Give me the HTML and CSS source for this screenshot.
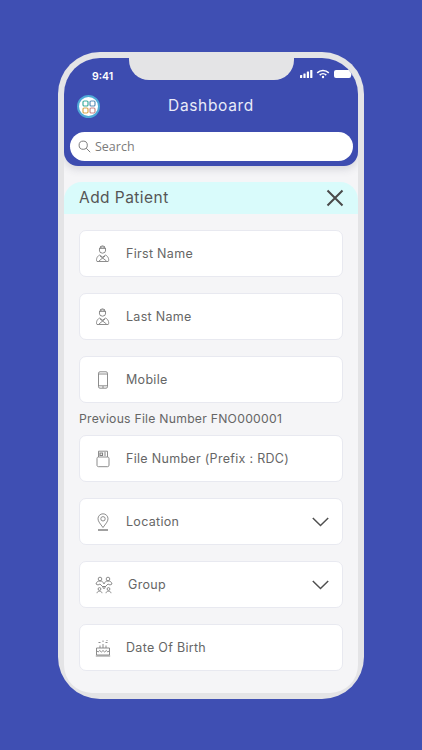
FILE: index.html
```html
<!DOCTYPE html>
<html lang="en">
<head>
<meta charset="utf-8">
<title>Add Patient</title>
<link rel="stylesheet" href="styles.css">
</head>
<body>
<main class="phone">
  <div class="screen">
    <header class="header">
      <div class="notch"></div>
      <div class="status">
        <span class="time">9:41</span>
        <svg class="status-icons" width="53" height="10" viewBox="0 0 53 10">
          <g fill="#fff">
            <rect x="0" y="6" width="2.2" height="3" rx=".5"/><rect x="3.4" y="4.4" width="2.2" height="4.6" rx=".5"/><rect x="6.8" y="2.6" width="2.2" height="6.4" rx=".5"/><rect x="10.2" y="1" width="2.2" height="8" rx=".5"/>
            <circle cx="23" cy="8" r="1.2"/>
            <rect x="34" y="1" width="17" height="8" rx="2"/><rect x="51.6" y="3.6" width="1.2" height="3" rx=".6"/>
          </g>
          <g fill="none" stroke="#fff" stroke-width="1.5">
            <path d="M17.2 3.9a8.2 8.2 0 0 1 11.6 0"/><path d="M19.7 6.1a4.7 4.7 0 0 1 6.6 0"/>
          </g>
        </svg>
      </div>
      <div class="titlebar">
        <div class="logo">
          <svg width="14" height="14" viewBox="0 0 14 14" fill="none" stroke-width="1.2">
            <rect x="1" y="1" width="5" height="5" rx="1.2" stroke="#3fae9f"/><rect x="8" y="1" width="5" height="5" rx="1.2" stroke="#5a8fb8"/>
            <rect x="1" y="8" width="5" height="5" rx="1.2" stroke="#d9a84e"/><rect x="8" y="8" width="5" height="5" rx="1.2" stroke="#c98a8a"/>
          </svg>
        </div>
        <h1 class="title">Dashboard</h1>
      </div>
      <div class="search">
        <svg width="13" height="13" viewBox="0 0 13 13" fill="none" stroke="#7d7d7d" stroke-width="1"><circle cx="5.2" cy="5.2" r="4.1"/><path d="M8.2 8.2l4 4"/></svg>
        <span>Search</span>
      </div>
    </header>

    <div class="sheet">
      <div class="sheet-head">
        <h2>Add Patient</h2>
        <svg class="close" width="18" height="18" viewBox="0 0 18 18" fill="none" stroke="#4a4a4a" stroke-width="2"><path d="M1.5 1.5l15 15M16.5 1.5l-15 15"/></svg>
      </div>
      <div class="form">
        <div class="field">
          <svg class="ico" width="16" height="18" viewBox="0 0 16 18"><circle cx="7.5" cy="5" r="3.2"/><path d="M4 3.4h7M5 1.8l2.5-1 2.5 1M2 16.5c-1-1-.6-5 2.6-6.4l3 2 3-2c3.200 1.400 3.600 5.400 2.600 6.400zM5 11l6.500 5M10 11l-6 5"/></svg>
          <span class="label">First Name</span>
        </div>
        <div class="field">
          <svg class="ico" width="16" height="18" viewBox="0 0 16 18"><circle cx="7.500" cy="5" r="3.200"/><path d="M4 3.400h7M5 1.800l2.500-1 2.500 1M2 16.500c-1-1-.6-5 2.600-6.400l3 2 3-2c3.200 1.400 3.600 5.400 2.600 6.400zM5 11l6.500 5M10 11l-6 5"/></svg>
          <span class="label">Last Name</span>
        </div>
        <div class="field">
          <svg class="ico" width="16" height="18" viewBox="0 0 16 18"><rect x="3.500" y=".8" width="9" height="16.400" rx="1.500"/><path d="M3.500 3h9M3.500 14.800h9M7 16h2"/></svg>
          <span class="label">Mobile</span>
        </div>
        <p class="prev">Previous File Number FNO000001</p>
        <div class="field">
          <svg class="ico" width="16" height="18" viewBox="0 0 16 18"><path d="M2 8.500c0-1 .7-1.500 1.500-1.500h9c.8 0 1.500.5 1.500 1.500v6.700c0 1-.7 1.500-1.500 1.500h-9c-.8 0-1.500-.5-1.500-1.500z"/><path d="M3.500 7V1.200h9V7"/><path d="M5 3h2.500v2.500H5zM9 3h2M9 5h2" stroke-width="1.200"/></svg>
          <span class="label">File Number (Prefix : RDC)</span>
        </div>
        <div class="field">
          <svg class="ico" width="16" height="18" viewBox="0 0 16 18"><path d="M8 14.500C5.500 11 3 8.500 3 5.800a5 5 0 0 1 10 0C13 8.500 10.500 11 8 14.500z"/><circle cx="8" cy="5.800" r="2.200"/><path d="M3 17h10" stroke-width="1.400"/></svg>
          <span class="label">Location</span>
          <svg class="chev" width="17" height="10" viewBox="0 0 17 10" fill="none" stroke="#4f4f4f" stroke-width="1.500"><path d="M.8 1l7.700 7.500L16.200 1"/></svg>
        </div>
        <div class="field">
          <svg class="ico" width="18" height="18" viewBox="0 0 18 18"><circle cx="5" cy="3" r="1.800"/><circle cx="13" cy="3" r="1.800"/><path d="M1 8c.5-2 1.500-3 4-3s3 1 4 3c1-2 1.500-3 4-3s3.500 1 4 3l-2 1-2-1-3 3-1-1-1 1-3-3-2 1z"/><circle cx="4.500" cy="13" r="1.400"/><circle cx="13.500" cy="13" r="1.400"/><circle cx="9" cy="11.500" r="1"/><path d="M2 17.200c.3-1.500 1-2 2.500-2s2.200.5 2.500 2M11 17.200c.3-1.500 1-2 2.500-2s2.200.5 2.500 2"/></svg>
          <span class="label">Group</span>
          <svg class="chev" width="17" height="10" viewBox="0 0 17 10" fill="none" stroke="#4f4f4f" stroke-width="1.500"><path d="M.8 1l7.700 7.500L16.200 1"/></svg>
        </div>
        <div class="field">
          <svg class="ico" width="16" height="18" viewBox="0 0 16 18"><path d="M1.500 9h13v7h-13zM.8 17h14.400"/><path d="M1.500 11.500l1.600 1.500 1.600-1.500 1.700 1.500 1.600-1.500 1.700 1.500 1.600-1.500 1.600 1.500 1.600-1.500M8 9V5M5 9V6.500M11 9V6.500M8 1.500v1.500M3.500 3.500h2M10.500 3.500h2M12 1v1"/></svg>
          <span class="label">Date Of Birth</span>
        </div>
      </div>
    </div>
  </div>
</main>
</body>
</html>
```

FILE: styles.css
```css
* { box-sizing: border-box; }

html, body {
  margin: 0;
  height: 750px;
  overflow: hidden;
}

body {
  background: #3f4fb3;
  padding: 52px 58px 0;
  font-family: "Inter", "Noto Sans", sans-serif;
}

.phone {
  width: 306px;
  height: 647px;
  padding: 6px;
  background: #e4e4e6;
  border-radius: 42px;
}

.screen {
  height: 635px;
  background: #f5f5f7;
  border-radius: 36px 36px 28px 28px;
  overflow: hidden;
}

.header {
  position: relative;
  height: 108px;
  background: #3d4cb0;
  border-radius: 0 0 14px 14px;
  padding: 0 6px;
  box-shadow: 0 3px 8px rgba(60, 60, 90, .18);
}

.notch {
  position: absolute;
  left: 65px;
  top: 0;
  width: 165px;
  height: 22px;
  background: #e4e4e6;
  border-radius: 0 0 20px 20px;
}

.status {
  height: 26px;
  display: flex;
  justify-content: space-between;
  align-items: flex-start;
  padding: 10px 0 0 22px;
}

.time {
  color: #fff;
  font: 600 10.500px/12px "Inter", sans-serif;
  margin-top: 3px;
}

.status-icons {
  margin: 1px -1px 0 0;
}

.titlebar {
  position: relative;
  height: 48px;
  display: flex;
  align-items: center;
  justify-content: center;
}

.logo {
  position: absolute;
  left: 7px;
  top: 11px;
  width: 23px;
  height: 23px;
  border-radius: 50%;
  background: #fff;
  border: 2px solid #4fa9d6;
  display: flex;
  align-items: center;
  justify-content: center;
}

.title {
  margin: 0;
  color: #e9ebf8;
  font: 400 15.500px/20px "Inter", sans-serif;
  letter-spacing: .65px;
  position: relative;
  top: -2px;
}

.search {
  height: 29px;
  background: #fff;
  border-radius: 15px;
  display: flex;
  align-items: center;
  gap: 4px;
  padding: 0 0 0 8px;
  margin-right: -1px;
  color: #7b7b7b;
  font: 400 12.500px/16px "Open Sans", sans-serif;
}

.sheet {
  padding-top: 16px;
}

.sheet-head {
  height: 32px;
  background: #d9fbfb;
  border-radius: 18px 18px 0 0;
  display: flex;
  align-items: center;
  justify-content: space-between;
  padding: 0 14px 0 15px;
}

.sheet-head h2 {
  margin: 0;
  color: #555;
  font: 400 15.500px/20px "Inter", sans-serif;
  letter-spacing: .45px;
}

.close {
  display: block;
}

.form {
  padding: 16px 15px 0;
  display: flex;
  flex-direction: column;
}

.field {
  height: 47px;
  flex: none;
  margin-bottom: 16px;
  background: #fff;
  border: 1px solid #e8e9f0;
  border-radius: 7px;
  display: flex;
  align-items: center;
  padding: 0 13px 0 15px;
}

.ico {
  flex: none;
  fill: none;
  stroke: #808080;
  stroke-width: .9;
}

.label {
  margin-left: 15px;
  color: #666;
  font: 400 12.500px/16px "Inter", sans-serif;
  letter-spacing: .3px;
}

.chev {
  margin-left: auto;
}

.prev {
  margin: -8px 0 9px;
  height: 15px;
  color: #666;
  font: 400 12.200px/15px "Inter", sans-serif;
  letter-spacing: .25px;
  white-space: nowrap;
}
```
